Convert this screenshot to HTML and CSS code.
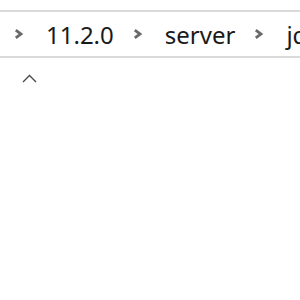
FILE: index.html
```html
<!DOCTYPE html>
<html lang="en">
<head>
  <meta charset="UTF-8" />
  <title>Explorer</title>
  <link rel="stylesheet" href="styles.css">
</head>
<body>
  <div class="address-bar">
    <span class="crumb-sep">
      <svg width="9" height="10" viewBox="0 0 9 10"><path d="M1.8 1.2 L7 5 L1.8 8.8" fill="none" stroke="#6a6a6a" stroke-width="2.8"/></svg>
    </span>
    <span class="crumb">11.2.0</span>
    <span class="crumb-sep">
      <svg width="9" height="10" viewBox="0 0 9 10"><path d="M1.8 1.2 L7 5 L1.8 8.8" fill="none" stroke="#6a6a6a" stroke-width="2.8"/></svg>
    </span>
    <span class="crumb">server</span>
    <span class="crumb-sep">
      <svg width="9" height="10" viewBox="0 0 9 10"><path d="M1.8 1.2 L7 5 L1.8 8.8" fill="none" stroke="#6a6a6a" stroke-width="2.8"/></svg>
    </span>
    <span class="crumb">jdbc</span>
  </div>
  <div class="list-header">
    <svg class="sort-arrow" width="15" height="9" viewBox="0 0 15 9"><path d="M1 8 L7.5 1.5 L14 8" fill="none" stroke="#4a4a4a" stroke-width="1.4"/></svg>
  </div>
</body>
</html>
```

FILE: styles.css
```css
body {
  margin: 0;
  background: #fff;
  font-family: "Noto Sans", "Open Sans", sans-serif;
  overflow: hidden;
}

.address-bar {
  display: flex;
  align-items: center;
  margin-top: 10px;
  height: 44px;
  border-top: 2px solid #dadada;
  border-bottom: 2px solid #dadada;
  padding-left: 14px;
  white-space: nowrap;
  overflow: hidden;
  font-size: 24px;
  color: #1a1a1a;
}
.crumb-sep {
  display: flex;
  align-items: center;
  width: 9px;
  margin-right: 23px;
}
.crumb {
  margin-right: 19px;
}

.list-header {
  padding: 16px 0 0 22px;
}
.sort-arrow {
  display: block;
}
```
